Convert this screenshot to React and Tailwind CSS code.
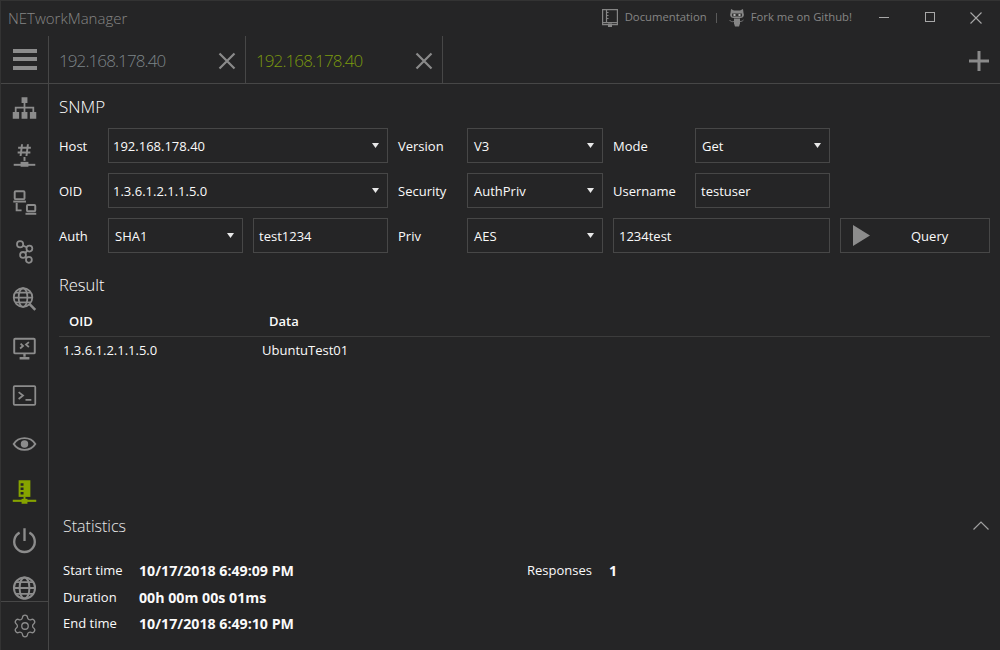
import { Settings } from 'lucide-react';

const FONT = "font-['Open_Sans',sans-serif]";

const SIDE_ICONS = [
  // network
  <g key="a">
    <path d="M21 13h6v6h-6zM12 28h6.500v7H12zM21 28h6v7h-6zM29.500 28H36v7h-6.500z" fill="currentColor" />
    <path d="M24 19v9M15 28v-4.500h18V28" fill="none" stroke="currentColor" strokeWidth="1.800" />
  </g>,
  // ip / subnet
  <g key="b" fill="none" stroke="currentColor">
    <path d="M21.500 12l-1.500 12M27.500 12l-1.500 12M17.500 15.500h13M17 20.500h13" strokeWidth="2" />
    <path d="M13 33h22" strokeWidth="2" />
    <path d="M24 25v4" strokeWidth="2" />
    <path d="M20 30h8v5h-8z" fill="currentColor" stroke="none" />
  </g>,
  // lan scan
  <g key="c" fill="none" stroke="currentColor" strokeWidth="2">
    <rect x="14" y="11" width="10" height="8" rx="1" />
    <path d="M12.500 21.500h13" />
    <path d="M16 23v7.500h5" />
    <rect x="26.500" y="25" width="8.500" height="6.500" rx="1" />
    <path d="M25 34h11" />
  </g>,
  // trace nodes
  <g key="d" fill="none" stroke="currentColor" strokeWidth="1.800">
    <circle cx="19.500" cy="16" r="3.200" />
    <circle cx="29" cy="20.500" r="3" />
    <circle cx="22.500" cy="27" r="3" />
    <circle cx="28.500" cy="32" r="3" />
    <path d="M22.500 17.500l3.700 1.700M27 22.700l-2.500 2.300M25 29l1 1" />
  </g>,
  // dns lookup
  <g key="e" fill="none" stroke="currentColor" strokeWidth="1.800">
    <circle cx="22.500" cy="21.500" r="9.500" />
    <ellipse cx="22.500" cy="21.500" rx="4.500" ry="9.500" />
    <path d="M13 21.500h19M14.500 16.500h16M14.500 26.500h16" />
    <path d="M29.500 28.500L35 34" strokeWidth="2.600" />
  </g>,
  // remote desktop
  <g key="f" fill="none" stroke="currentColor">
    <rect x="13.500" y="14.500" width="21" height="15" rx="1" strokeWidth="2" />
    <path d="M24 30v3M19 34.500h10" strokeWidth="2.400" />
    <path d="M20 19.500l2.500 2.500-3 2.500M28.500 18l-3 2.500 3 2.500" strokeWidth="1.800" />
  </g>,
  // terminal
  <g key="g" fill="none" stroke="currentColor" strokeWidth="1.800">
    <rect x="13" y="14" width="22" height="19" rx="1" />
    <path d="M18 20l4.500 3.500-4.500 3.500M25 28h6" />
  </g>,
  // eye
  <g key="h">
    <path d="M13 24c5-8 17-8 22 0-5 8-17 8-22 0z" fill="none" stroke="currentColor" strokeWidth="2" />
    <circle cx="24" cy="24" r="3.800" fill="currentColor" />
  </g>,
  // snmp, active
  <g key="i">
    <path d="M18 12h12v17H18z" fill="currentColor" />
    <path d="M20 15h3v2.500h-3zM20 19.500h3V22h-3zM20 24h3v2.500h-3z" fill="#252526" />
    <path d="M12 33h24" stroke="currentColor" strokeWidth="2.200" />
    <path d="M24 29v3" stroke="currentColor" strokeWidth="2" />
    <path d="M21 31h6v5h-6z" fill="currentColor" />
  </g>,
  // power
  <g key="j" fill="none" stroke="currentColor" strokeWidth="2.400">
    <path d="M19 16.500a10.500 10.500 0 1 0 10 0" />
    <path d="M24 12v13" />
  </g>,
  // globe
  <g key="k" fill="none" stroke="currentColor" strokeWidth="2">
    <circle cx="24" cy="24" r="10.800" />
    <ellipse cx="24" cy="24" rx="5" ry="10.800" />
    <path d="M13.200 24h21.600M15 18h18M15 30h18" />
  </g>,
];

function DropArrow() {
  return (
    <svg width="7" height="5" viewBox="0 0 7 5" className="shrink-0">
      <path d="M0 0h7L3.500 5z" fill="#e8e8e8" />
    </svg>
  );
}

function Label({ children }) {
  return <span className="pt-[3px]">{children}</span>;
}

function Select({ value, pad = 'pl-[4px]', className = '' }) {
  return (
    <div className={`h-[35px] border border-[#474747] flex items-center justify-between ${pad} pr-[8px] ${className}`}>
      <span className="pt-[3px]">{value}</span>
      <DropArrow />
    </div>
  );
}

function Field({ value, className = '' }) {
  return (
    <div className={`h-[35px] border border-[#474747] flex items-center pl-[5px] ${className}`}>
      <span className="pt-[3px]">{value}</span>
    </div>
  );
}

function Tab({ label, active }) {
  return (
    <div className="w-[197px] h-full border-r border-[#474747] flex items-center pl-[10px] pr-[9px] justify-between">
      <span className={`text-[17px] tracking-[-0.9px] font-light pt-[3px] ${active ? 'text-[#7c9a0e]' : 'text-[#7d8488]'}`}>{label}</span>
      <svg width="18" height="18" viewBox="0 0 18 18" fill="none" stroke="#8a8a8a" strokeWidth="2.200" className="mt-[2px]">
        <path d="M1.500 1.500l15 15M16.500 1.500l-15 15" />
      </svg>
    </div>
  );
}

export default function App() {
  return (
    <div className={`${FONT} w-[1000px] h-[650px] bg-[#252526] text-[#fafafa] text-[13px] flex flex-col overflow-hidden border-t border-l border-[#333333]`}>
      <header className="h-[35px] shrink-0 flex items-center text-[#858585]">
        <span className="ml-[7px] text-[15px] font-light leading-none">NETworkManager</span>
        <div className="ml-auto flex items-center text-[11.300px]">
          <svg width="16" height="18" viewBox="0 0 16 18" fill="none" stroke="#858585" strokeWidth="1.200" className="-mt-[1px]">
            <path d="M.600.600h14.800v15H.600zM.600 13.600h14.800" />
            <path d="M4.500.600v13" />
            <path d="M4.500 3.500h2M4.500 6.500h2M4.500 9.500h2" stroke="#858585" />
            <path d="M6 14.500h4V18H6z" fill="#858585" stroke="none" />
          </svg>
          <span className="ml-[7px] -mt-[2px]">Documentation</span>
          <span className="w-px h-[10px] bg-[#5a5a5a] ml-[9px] -mt-[1px]" />
          <svg width="16" height="18" viewBox="0 0 16 18" className="ml-[12px] -mt-[1px]" fill="#858585">
            <path d="M2 0l3 1.500h6L14 0l.500 4c.500 1 .500 2 .200 3-.500 1.200-1.700 2-3.200 2h-7C3 9 1.800 8.200 1.300 7 1 6 1 5 1.500 4z" />
            <path d="M5 9.500h6v5l-1 3H6l-1-3z" />
            <path d="M3 4.500h10v3H3z" fill="#333333" />
            <path d="M5 12.500c-2 .500-3.500 0-4.500-1.500M11 12.500c1.500 0 2.500-.500 3.500-1.500" fill="none" stroke="#858585" strokeWidth=".800" />
            <rect x="4.500" y="5" width="2" height="2" fill="#b0b0b0" />
            <rect x="9.500" y="5" width="2" height="2" fill="#b0b0b0" />
          </svg>
          <span className="ml-[6px] -mt-[2px]">Fork me on Github!</span>
          <div className="flex items-center">
            <div className="w-[46px] ml-[8px] flex justify-center">
              <span className="w-[10px] h-px bg-[#a8a8a8] ml-[1px] -mt-[2px]" />
            </div>
            <div className="w-[46px] flex justify-center">
              <span className="w-[10px] h-[10px] border border-[#a8a8a8] -mt-[4px] ml-[2px]" />
            </div>
            <div className="w-[48px] flex justify-center">
              <svg width="12" height="12" viewBox="0 0 12 12" fill="none" stroke="#a8a8a8" strokeWidth="1.100" className="-mt-[1px]">
                <path d="M.500.500l11 11M11.500.500l-11 11" />
              </svg>
            </div>
          </div>
        </div>
      </header>

      <div className="flex-1 flex min-h-0">
        <aside className="w-[48px] shrink-0 border-r border-[#474747] flex flex-col">
          <div className="h-[48px] shrink-0 border-b border-[#474747] flex items-center justify-center text-[#8c8c8c]">
            <svg width="24" height="22" viewBox="0 0 24 22" fill="currentColor">
              <path d="M0 0h24v4H0zM0 8h24v4H0zM0 17h24v4H0z" />
            </svg>
          </div>
          <div className="flex-1 min-h-0 overflow-hidden">
            {SIDE_ICONS.map((icon, i) => (
              <div key={i} className={`h-[48px] flex items-center justify-center ${i === 8 ? 'text-[#86a300]' : 'text-[#8c8c8c]'}`}>
                <svg width="48" height="48" viewBox="0 0 48 48">{icon}</svg>
              </div>
            ))}
          </div>
          <div className="h-[49px] shrink-0 border-t border-[#474747] flex items-center justify-center text-[#8c8c8c]">
            <Settings size={26} strokeWidth={1.200} />
          </div>
        </aside>

        <main className="flex-1 min-w-0 flex flex-col">
          <div className="h-[48px] shrink-0 border-b border-[#474747] flex items-stretch">
            <Tab label="192.168.178.40" />
            <Tab label="192.168.178.40" active />
            <div className="ml-auto flex items-center pr-[11px] pt-[3px] text-[#8a8a8a]">
              <svg width="20" height="20" viewBox="0 0 20 20" fill="currentColor">
                <path d="M8.500 0h3v20h-3z" />
                <path d="M0 8.500h20v3H0z" />
              </svg>
            </div>
          </div>

          <div className="flex-1 min-h-0 flex flex-col pl-[10px] pr-[10px]">
            <h1 className="text-[17px] font-light leading-none mt-[14px] text-white">SNMP</h1>
            <div className="mt-[13px] grid grid-cols-[39px_135px_135px_59px_136px_72px_135px_150px] gap-x-[10px] gap-y-[10px] items-center">
              <Label>Host</Label>
              <Select value="192.168.178.40" className="col-span-2" />
              <Label>Version</Label>
              <Select value="V3" pad="pl-[6px]" />
              <Label>Mode</Label>
              <Select value="Get" pad="pl-[6px]" />
              <span />

              <Label>OID</Label>
              <Select value="1.3.6.1.2.1.1.5.0" className="col-span-2" />
              <Label>Security</Label>
              <Select value="AuthPriv" pad="pl-[6px]" />
              <Label>Username</Label>
              <Field value="testuser" />
              <span />

              <Label>Auth</Label>
              <Select value="SHA1" pad="pl-[6px]" />
              <Field value="test1234" />
              <Label>Priv</Label>
              <Select value="AES" pad="pl-[6px]" />
              <Field value="1234test" className="col-span-2" />
              <div className="h-[35px] border border-[#474747] flex items-center pl-[12px]">
                <svg width="17" height="21" viewBox="0 0 17 21">
                  <path d="M0 0l17 10.500L0 21z" fill="#8c8c8c" />
                </svg>
                <span className="ml-[41px] pt-[3px]">Query</span>
              </div>
            </div>

            <h2 className="text-[16.500px] font-light leading-none mt-[24px] text-white">Result</h2>
            <div className="mt-[19px] h-[24px] border-b border-[#3c3c3c] grid grid-cols-[200px_1fr] pl-[10px] font-semibold items-start leading-[17px]">
              <span>OID</span>
              <span>Data</span>
            </div>
            <div className="mt-[5px] grid grid-cols-[199px_1fr] pl-[4px] leading-[17px]">
              <span>1.3.6.1.2.1.1.5.0</span>
              <span>UbuntuTest01</span>
            </div>

            <section className="mt-auto pl-[4px] pb-[18px]">
              <div className="flex items-center justify-between h-[22px]">
                <span className="text-[16px] font-light leading-none text-[#e8e8e8]">Statistics</span>
                <svg width="16" height="9" viewBox="0 0 16 9" fill="none" stroke="#a0a0a0" strokeWidth="1.200" className="mr-[1px] -mt-[1px]">
                  <path d="M.500 8.500L8 1l7.500 7.500" />
                </svg>
              </div>
              <div className="mt-[25px] grid grid-cols-[76px_388px_82px_1fr] gap-y-[9.500px] leading-[17px]">
                <span>Start time</span>
                <span className="font-bold text-[14.200px]">10/17/2018 6:49:09 PM</span>
                <span>Responses</span>
                <span className="font-bold text-[14.200px]">1</span>
                <span>Duration</span>
                <span className="font-bold text-[14.200px] col-span-3">00h 00m 00s 01ms</span>
                <span>End time</span>
                <span className="font-bold text-[14.200px] col-span-3">10/17/2018 6:49:10 PM</span>
              </div>
            </section>
          </div>
        </main>
      </div>
    </div>
  );
}
